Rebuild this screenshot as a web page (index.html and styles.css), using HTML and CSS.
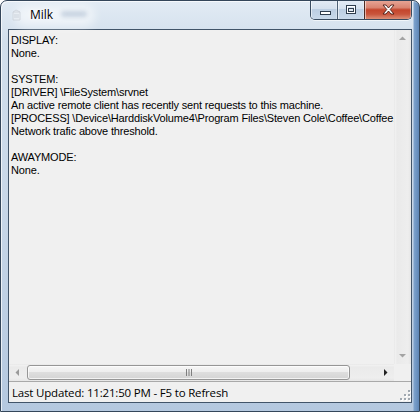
FILE: index.html
```html
<!DOCTYPE html>
<html>
<head>
<meta charset="utf-8">
<title>Milk</title>
<link rel="stylesheet" href="styles.css">
</head>
<body>
<div class="window">
  <div class="glow"></div>
  <div class="titlebar">
    <svg class="app-icon" width="13" height="12" viewBox="0 0 13 12">
      <path d="M3 3 L6 1 L10 3 L10 11 L3 11 Z" fill="#e9eef3" stroke="#c6ccd3" stroke-width="0.8"/>
      <path d="M3 3 L10 3" stroke="#c6ccd3" stroke-width="0.8"/>
      <rect x="4" y="5" width="5" height="4" fill="#d8dee5"/>
    </svg>
    <span class="title">Milk</span>
    <span class="title-ghost"></span>
    <div class="caption-buttons">
      <div class="cbtn cbtn-min">
        <svg width="28" height="19" viewBox="0 0 28 19"><rect x="9.5" y="11.5" width="10" height="3" fill="#fff" stroke="#2f3d4d" stroke-width="1"/></svg>
      </div>
      <div class="cbtn cbtn-max">
        <svg width="27" height="19" viewBox="0 0 27 19"><rect x="8.5" y="5.5" width="9" height="8" fill="none" stroke="#2f3d4d" stroke-width="1"/><rect x="9.5" y="6.5" width="7" height="6" fill="none" stroke="#fff" stroke-width="1"/><rect x="10.5" y="8.5" width="5" height="3" fill="#dfe7f0" stroke="#2f3d4d" stroke-width="1"/></svg>
      </div>
      <div class="cbtn cbtn-close">
        <svg width="47" height="19" viewBox="0 0 47 19"><path d="M18 5 L21 5 L23.5 8 L26 5 L29 5 L25.2 9.5 L29 14 L26 14 L23.5 11 L21 14 L18 14 L21.8 9.5 Z" fill="#fff" stroke="#4a1a12" stroke-width="0.9" stroke-linejoin="round"/></svg>
      </div>
    </div>
  </div>
  <div class="client">
    <div class="textbox">
      <div class="text-row">
        <div class="text">DISPLAY:
None.

SYSTEM:
[DRIVER] \FileSystem\srvnet
An active remote client has recently sent requests to this machine.
[PROCESS] \Device\HarddiskVolume4\Program Files\Steven Cole\Coffee\Coffee.exe
Network trafic above threshold.

AWAYMODE:
None.</div>
        <div class="vscroll">
          <div class="sbtn">
            <svg width="17" height="17" viewBox="0 0 17 17"><path d="M5 10 L8.5 6.5 L12 10 Z" fill="#a3a3a3"/></svg>
          </div>
          <div class="vtrack"></div>
          <div class="sbtn">
            <svg width="17" height="17" viewBox="0 0 17 17"><path d="M5 7 L8.5 10.5 L12 7 Z" fill="#a3a3a3"/></svg>
          </div>
        </div>
      </div>
      <div class="hscroll">
        <div class="sbtn">
          <svg width="17" height="17" viewBox="0 0 17 17"><path d="M10 5 L6.5 8.5 L10 12 Z" fill="#9a9a9a"/></svg>
        </div>
        <div class="htrack">
          <div class="thumb">
            <svg class="grip" width="8" height="7" viewBox="0 0 8 7"><path d="M1.5 0 V7 M4 0 V7 M6.5 0 V7" stroke="#7e7e7e" stroke-width="1"/></svg>
          </div>
        </div>
        <div class="sbtn">
          <svg width="17" height="17" viewBox="0 0 17 17"><path d="M7 5 L10.5 8.5 L7 12 Z" fill="#222"/></svg>
        </div>
        <div class="corner"></div>
      </div>
    </div>
    <div class="statusbar">
      <span class="status-text">Last Updated: 11:21:50 PM - F5 to Refresh</span>
      <svg class="sizegrip" width="12" height="12" viewBox="0 0 12 12">
        <g fill="#fff"><rect x="10" y="2" width="2" height="2"/><rect x="10" y="6" width="2" height="2"/><rect x="10" y="10" width="2" height="2"/><rect x="6" y="6" width="2" height="2"/><rect x="6" y="10" width="2" height="2"/><rect x="2" y="10" width="2" height="2"/></g>
        <g fill="#a0a8b0"><rect x="9" y="1" width="2" height="2"/><rect x="9" y="5" width="2" height="2"/><rect x="9" y="9" width="2" height="2"/><rect x="5" y="5" width="2" height="2"/><rect x="5" y="9" width="2" height="2"/><rect x="1" y="9" width="2" height="2"/></g>
      </svg>
    </div>
  </div>
</div>
</body>
</html>
```

FILE: styles.css
```css
* {
  box-sizing: border-box;
  margin: 0;
  padding: 0;
}

html, body {
  width: 420px;
  height: 412px;
  overflow: hidden;
  background: #ffffff;
}

.window {
  position: relative;
  width: 420px;
  height: 412px;
  display: flex;
  flex-direction: column;
  border: 1px solid #34465a;
  border-radius: 7px 7px 0 0;
  overflow: hidden;
  background:
    linear-gradient(90deg, rgba(120,160,205,0) 0, rgba(120,160,205,0) 412px, #7da2cc 413px, #5e86b6 418px),
    linear-gradient(180deg, #e2ebf4 0, #d2dfec 40px, #c8d7e8 200px, #b4c8df 412px);
  box-shadow: inset 1px 1px 0 rgba(255,255,255,0.7);
}

.glow {
  position: absolute;
  left: 14px;
  top: 4px;
  width: 80px;
  height: 22px;
  border-radius: 12px;
  background: rgba(255,255,255,0.55);
  filter: blur(5px);
}

.titlebar {
  position: relative;
  height: 28px;
  display: flex;
  align-items: flex-start;
}

.app-icon {
  margin: 8px 0 0 9px;
  opacity: 0.8;
}

.title {
  margin: 7px 0 0 7px;
  font-family: "Open Sans", "Liberation Sans", sans-serif;
  font-size: 12px;
  line-height: 14px;
  color: #000;
  text-shadow: 0 0 6px #fff, 0 0 3px #fff;
}

.title-ghost {
  margin: 10px 0 0 8px;
  width: 26px;
  height: 6px;
  border-radius: 3px;
  background: rgba(150,170,195,0.45);
  filter: blur(2px);
}

.caption-buttons {
  margin: -1px 7px 0 auto;
  display: flex;
  height: 20px;
  border: 1px solid #3a4c60;
  border-top: none;
  border-radius: 0 0 5px 5px;
  overflow: hidden;
  box-shadow: 0 1px 0 rgba(255,255,255,0.6);
}

.cbtn {
  height: 19px;
  box-shadow: inset 1px 0 0 rgba(255,255,255,0.55), inset 0 1px 0 rgba(255,255,255,0.4), inset -1px 0 0 rgba(255,255,255,0.3);
}

.cbtn svg {
  display: block;
}

.cbtn-min {
  width: 27px;
  border-right: 1px solid #4d6075;
  background: linear-gradient(180deg, #e4ecf5 0, #d5e1ee 45%, #bccee2 50%, #c9d9ea 100%);
}

.cbtn-max {
  width: 27px;
  border-right: 1px solid #4d2a22;
  background: linear-gradient(180deg, #e4ecf5 0, #d5e1ee 45%, #bccee2 50%, #c9d9ea 100%);
}

.cbtn-close {
  width: 46px;
  background: linear-gradient(180deg, #e8a899 0, #d98471 40%, #c4452c 52%, #c9553c 75%, #dc9078 100%);
}

.client {
  margin: 0 7px 8px 7px;
  flex: 1;
  display: flex;
  flex-direction: column;
  border: 1px solid #415469;
  background: #f0f0f0;
}

.textbox {
  display: flex;
  flex-direction: column;
  border-bottom: 1px solid #a9a9a9;
}

.text-row {
  display: flex;
  height: 334px;
}

.text {
  flex: 1;
  overflow: hidden;
  white-space: pre;
  padding: 4px 0 0 2px;
  font-family: "Liberation Sans", Arial, sans-serif;
  font-size: 11px;
  line-height: 13px;
  letter-spacing: -0.16px;
  color: #000;
  background: #f0f0f0;
}

.vscroll {
  width: 17px;
  display: flex;
  flex-direction: column;
  background: linear-gradient(90deg, #e3e3e3 0, #f2f2f2 1px, #eaeaea 3px, #eeeeee 14px, #e6e6e6 17px);
}

.sbtn {
  width: 17px;
  height: 17px;
}

.sbtn svg {
  display: block;
}

.vtrack {
  flex: 1;
}

.hscroll {
  display: flex;
  height: 17px;
  background: linear-gradient(180deg, #e3e3e3 0, #f2f2f2 1px, #eaeaea 3px, #eeeeee 14px, #e6e6e6 17px);
}

.htrack {
  flex: 1;
  display: flex;
  align-items: center;
  padding-left: 1px;
}

.thumb {
  width: 323px;
  height: 15px;
  border: 1px solid #969696;
  border-radius: 3px;
  display: flex;
  align-items: center;
  justify-content: center;
  background: linear-gradient(180deg, #f6f6f6 0, #eeeeee 45%, #dedede 50%, #d4d4d4 100%);
  box-shadow: inset 0 0 0 1px rgba(255,255,255,0.7);
}

.grip {
  display: block;
}

.corner {
  width: 17px;
  background: #f0f0f0;
}

.statusbar {
  flex: 1;
  display: flex;
  align-items: flex-end;
  justify-content: space-between;
  padding-left: 3px;
}

.status-text {
  align-self: center;
  font-family: "Open Sans", "Liberation Sans", sans-serif;
  font-size: 11.5px;
  line-height: 16px;
  letter-spacing: -0.18px;
  color: #000;
  margin-top: 2px;
}

.sizegrip {
  display: block;
  margin: 0 0 1px 0;
}
```
